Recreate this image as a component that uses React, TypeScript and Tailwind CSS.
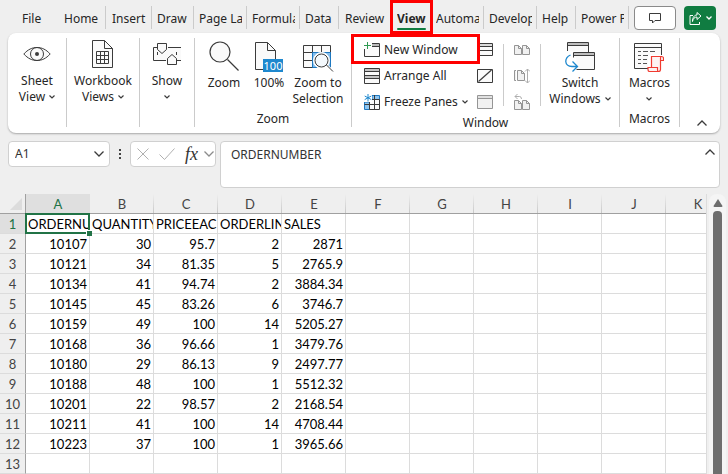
import type { ReactNode } from 'react'
import { clsx } from 'clsx'

interface TabItem {
  label: string
  width: string
  active?: boolean
}

const TABS: TabItem[] = [
  { label: 'File', width: 'w-[57px] pl-[22px]' },
  { label: 'Home', width: 'w-[49px] pl-[7px] border-r' },
  { label: 'Insert', width: 'w-[46px] pl-[6px] border-r' },
  { label: 'Draw', width: 'w-[42px] pl-[5px] border-r' },
  { label: 'Page La', width: 'w-[53px] pl-[5px] border-r' },
  { label: 'Formula', width: 'w-[53px] pl-[5px] border-r' },
  { label: 'Data', width: 'w-[39px] pl-[5px] border-r' },
  { label: 'Review', width: 'w-[53px] pl-[6px]' },
  { label: 'View', width: 'w-[39px] pl-[5px]', active: true },
  { label: 'Automa', width: 'w-[53px] pl-[5px] border-r' },
  { label: 'Develop', width: 'w-[53px] pl-[5px] border-r' },
  { label: 'Help', width: 'w-[39px] pl-[5px] border-r' },
  { label: 'Power P', width: 'w-[53px] pl-[5px] border-r' },
]

const COLUMNS = ['A', 'B', 'C', 'D', 'E', 'F', 'G', 'H', 'I', 'J', 'K']

const ROWS: string[][] = [
  ['ORDERNU', 'QUANTITY', 'PRICEEACH', 'ORDERLIN', 'SALES'],
  ['10107', '30', '95.7', '2', '2871'],
  ['10121', '34', '81.35', '5', '2765.9'],
  ['10134', '41', '94.74', '2', '3884.34'],
  ['10145', '45', '83.26', '6', '3746.7'],
  ['10159', '49', '100', '14', '5205.27'],
  ['10168', '36', '96.66', '1', '3479.76'],
  ['10180', '29', '86.13', '9', '2497.77'],
  ['10188', '48', '100', '1', '5512.32'],
  ['10201', '22', '98.57', '2', '2168.54'],
  ['10211', '41', '100', '14', '4708.44'],
  ['10223', '37', '100', '1', '3965.66'],
  [],
]

/* ---------- icons ---------- */

interface IconProps {
  w: number
  h: number
  children: ReactNode
  className?: string
}

function Icon({ w, h, children, className }: IconProps) {
  return (
    <svg
      width={w}
      height={h}
      viewBox={`0 0 ${w} ${h}`}
      fill="none"
      stroke="#3b3b3b"
      className={clsx('shrink-0', className)}
      aria-hidden="true"
    >
      {children}
    </svg>
  )
}

function Chevron({ className }: { className?: string }) {
  return (
    <Icon w={6} h={4} className={clsx('inline-block', className)}>
      <path d="M.5.5 3 3 5.5.5" strokeWidth="1.2" />
    </Icon>
  )
}

function EyeIcon() {
  return (
    <Icon w={28} h={32}>
      <path d="M.8 16C5 11.5 9 9.5 14 9.5S23 11.5 27.2 16C23 20.5 19 22.5 14 22.5S5 20.5.8 16Z" fill="#fafafa" />
      <circle cx="14" cy="16" r="6.5" />
      <circle cx="14" cy="16" r="2" fill="#3b3b3b" stroke="none" />
    </Icon>
  )
}

function WorkbookIcon() {
  return (
    <Icon w={22} h={32}>
      <path d="M.5 2.5h12l8 8v19H.5Z" fill="#fafafa" />
      <path d="M12.5 2.5v8h8" />
      <path d="M4.5 13.5h12v12h-12ZM4.5 17.5h12M4.5 21.5h12M8.5 13.5v12M12.5 13.5v12" />
    </Icon>
  )
}

function ShowIcon() {
  return (
    <Icon w={28} h={32}>
      <path d="M1 9.5h27v13H1Z" fill="#fafafa" stroke="none" />
      <path d="M4 9.5H.5v13H13M15 9.5h13M24 22.5h4M4.5 14v3M23.5 14v3" />
      <path d="M4.5 5.5h9v6l-4.5 4-4.5-4Z" fill="#fafafa" />
      <path d="M14.5 26.5h9v-6l-4.5-4-4.5 4Z" fill="#fafafa" />
    </Icon>
  )
}

function ZoomIcon() {
  return (
    <Icon w={30} h={34}>
      <circle cx="11" cy="14" r="10" fill="#fafafa" strokeWidth="1.2" />
      <path d="m18.5 21.5 11 11" strokeWidth="1.2" />
    </Icon>
  )
}

function HundredIcon() {
  return (
    <span className="relative block h-[34px] w-[28px]">
      <Icon w={28} h={34}>
        <path d="M.5 4.5h12l8 8v19H.5Z" fill="#fafafa" />
        <path d="M12.5 4.5v8h8" />
        <path d="M8 21h20v13H8Z" fill="#1e88ce" stroke="none" />
      </Icon>
      <span className="absolute right-0 bottom-0 w-5 text-center text-[11px] leading-[13px] text-white">100</span>
    </span>
  )
}

function ZoomSelectionIcon() {
  return (
    <Icon w={32} h={34}>
      <path d="M1.5 7.5h27v22h-27Z" fill="#fafafa" />
      <path d="M10 14h18v15H10Z" fill="#83bdec" stroke="none" />
      <path d="M1.5 14.5h27M1.5 22.5h9M10.5 7.5v22M19.5 7.5v7" />
      <path d="M28.5 14v15.5H10.5V14.5h18" stroke="#1e78c0" />
      <path d="m24 28 7 6" stroke="#fff" strokeWidth="4" />
      <circle cx="19.5" cy="22.5" r="8" fill="#fff" stroke="#fff" />
      <circle cx="19.5" cy="22.5" r="6.5" fill="#f4f9fd" />
      <path d="m24.5 27 6.5 6.5" />
    </Icon>
  )
}

function NewWindowIcon() {
  return (
    <Icon w={16} h={16}>
      <path d="M1 5h14v9H1Z" fill="#fafafa" stroke="none" />
      <path d="M8 3h7" stroke="#bbb" strokeWidth="2" />
      <path d="M.5 7v7.5h15V1.500H8M8 4.500h7.500" />
      <path d="M3.500 0v7M0 3.500h7" stroke="#2f9a52" />
    </Icon>
  )
}

function ArrangeIcon() {
  return (
    <Icon w={16} h={16}>
      <path d="M.5.5h15v15H.5Z" fill="#fafafa" />
      <path d="M1 2h14M1 9h14" stroke="#c4c4c4" strokeWidth="2" />
      <path d="M.5 3.5h15M.5 7.5h15M.5 10.5h15" />
    </Icon>
  )
}

function FreezeIcon() {
  return (
    <Icon w={16} h={16}>
      <path d="M5 1h10.5v14.5H.5V8" fill="#fafafa" stroke="none" />
      <path d="M8 1.5h7.5v4H8ZM.5 8h5v7.5h-5Z" fill="#8ec5f0" stroke="#1e78c0" />
      <path d="M5.5 5.5h10v10h-10ZM10.5 1v14.5M.5 10.5h15" />
      <path d="M0 0h8v8H0Z" fill="#fff" stroke="none" />
      <path d="M4 0v7.5M.7 2l6.6 3.6M7.3 2 .7 5.6" stroke="#1e88ce" />
    </Icon>
  )
}

function SplitIcon() {
  return (
    <Icon w={16} h={16}>
      <path d="M.5 1.5h15v12H.5Z" fill="#fafafa" />
      <path d="M.5 4.5h15M.5 8.5h15" />
      <path d="M1 3h14" stroke="#bbb" />
    </Icon>
  )
}

function HideIcon() {
  return (
    <Icon w={16} h={16}>
      <path d="M.5 1.5h15v13H.5Z" fill="#fafafa" />
      <path d="M1.5 13.5 14.5 2" strokeWidth="1.2" />
    </Icon>
  )
}

function UnhideIcon() {
  return (
    <Icon w={16} h={16}>
      <path d="M.5 1.5h15v13H.5ZM.5 4.5h15" fill="#f1f1f1" stroke="#959595" />
      <path d="M1 3h14" stroke="#cfcfcf" />
    </Icon>
  )
}

function SideBySideIcon() {
  return (
    <Icon w={16} h={16}>
      <path d="M.5 3.5h4l3 3v6h-7ZM8.5 3.5h4l3 3v6h-7Z" fill="#f1f1f1" stroke="#959595" />
      <path d="M4.5 3.5v3h3M12.5 3.5v3h3" stroke="#959595" />
    </Icon>
  )
}

function SyncScrollIcon() {
  return (
    <Icon w={16} h={16}>
      <path d="M2 2.500H.5v10H2M3.500 2.500h4l3 3v7h-7Z" fill="#f1f1f1" stroke="#959595" />
      <path d="M7.500 2.500v3h3" stroke="#959595" />
      <path d="M13.500 1v14M11 3.500 13.500 1 16 3.500M11 12.500l2.500 2.500 2.500-2.500" stroke="#adadad" />
    </Icon>
  )
}

function ResetPositionIcon() {
  return (
    <Icon w={16} h={16}>
      <path d="M.5 6.500h4l3 3v6h-7ZM8.500 6.500h4l3 3v6h-7Z" fill="#f1f1f1" stroke="#959595" />
      <path d="M4.500 6.500v3h3M12.500 6.500v3h3" stroke="#959595" />
      <path d="M3.500 0 1 2.500 3.500 5M1 2.500h4.500q2 0 2 2.500" stroke="#adadad" />
    </Icon>
  )
}

function SwitchIcon() {
  return (
    <Icon w={30} h={34}>
      <path d="M2.500 13V4.500h21V14" fill="#fafafa" />
      <path d="M3 6h20" stroke="#bdbdbd" strokeWidth="2" />
      <path d="M2.500 7.500h21" />
      <path d="M8.500 14.500h21v17h-21Z" fill="#fafafa" />
      <path d="M9 16h20" stroke="#bdbdbd" strokeWidth="2" />
      <path d="M8.500 17.500h21" />
      <path d="M3.500 19.500h8v13h-8Z" fill="#fff" stroke="none" />
      <path d="M5.500 17C-1 20-1 28 7 28.500h5M7.500 23.500l5 5-5 5" stroke="#1e88ce" strokeWidth="1.3" />
    </Icon>
  )
}

function MacrosIcon() {
  return (
    <Icon w={30} h={34}>
      <path d="M.5 5.500h27v25H.5Z" fill="#fafafa" />
      <path d="M.5 9.500h27" />
      <path d="M4 13.500h3M9 13.500h5M16 13.500h5M4 17.500h3M9 17.500h5M4 21.500h3M9 21.500h4M4 25.500h3M9 25.500h4" stroke="#555" />
      <path d="M14 17h16v17H14Z" fill="#fff" stroke="none" />
      <path
        d="M17.500 29.500v-11h10q2 0 2 2v2h-3v9q0 2-2 2h-9q-1.500 0-1.500-2v-2h9.500v2q0 2 1 2M26.500 22v-2q0-1.500 1-1.500"
        fill="#fdf3f2"
        stroke="#f03a30"
        strokeWidth="1.2"
      />
    </Icon>
  )
}

function WideChevron({ up = false, className, light = false }: { up?: boolean; className?: string; light?: boolean }) {
  return (
    <Icon w={10} h={6} className={className}>
      <path d={up ? 'M.5 5.500 5 1l4.500 4.500' : 'M.5.5 5 5 9.500.5'} stroke={light ? '#8c8c8c' : '#3b3b3b'} strokeWidth="1.3" />
    </Icon>
  )
}

/* ---------- ribbon ---------- */

function Tabs() {
  return (
    <div className="flex h-[33px] items-start pt-[6px]">
      {TABS.map((tab) => (
        <button
          key={tab.label}
          type="button"
          className={clsx(
            'relative h-[23px] shrink-0 border-[#cbcbcb] pt-px pr-1 text-left leading-6',
            tab.width,
            tab.active && 'font-bold',
          )}
        >
          <span className="block overflow-hidden whitespace-nowrap">{tab.label}</span>
          {tab.active && (
            <>
              <span className="absolute -bottom-px left-[5px] h-[2px] w-[29px] rounded bg-[#107c41]" />
              <span className="absolute -top-[6px] -left-[2px] z-10 h-[34px] w-[43px] border-3 border-[#fe0000]" />
            </>
          )}
        </button>
      ))}
      <div className="flex flex-1 justify-end gap-2 pr-3">
        <button
          type="button"
          aria-label="Comments"
          className="flex h-6 w-[42px] items-center justify-center rounded border border-[#8a8a8a] bg-white"
        >
          <Icon w={12} h={12}>
            <path d="M.5 1.500h11v7H6L3.500 11V8.500h-3Z" />
          </Icon>
        </button>
        <button
          type="button"
          aria-label="Share"
          className="flex h-6 w-8 items-center justify-center gap-1 rounded bg-[#107c41]"
        >
          <Icon w={13} h={13}>
            <path d="M4 3.500H1v9h9.500V10M3.500 9.500C4 6.500 5.500 5 8 5V7.500l4-3.500-4-3.500V3C5.500 3 3.500 5 3.500 9.500Z" stroke="#fff" />
          </Icon>
          <svg width="6" height="4" fill="none" stroke="#fff" strokeWidth="1.3" aria-hidden="true">
            <path d="M.5.5 3 3 5.500.5" />
          </svg>
        </button>
      </div>
    </div>
  )
}

interface GroupProps {
  label?: string
  width: string
  children: ReactNode
}

function Group({ label, width, children }: GroupProps) {
  return (
    <div className={clsx('flex h-[89px] shrink-0 flex-col border-r border-[#cbcbcb]', width)}>
      <div className="flex h-[79px] justify-center">{children}</div>
      {label && <div className="text-center leading-4">{label}</div>}
    </div>
  )
}

interface LargeButtonProps {
  icon: ReactNode
  lines: string[]
  chevron?: boolean
  width?: string
}

function LargeButton({ icon, lines, chevron, width }: LargeButtonProps) {
  return (
    <button
      type="button"
      className={clsx('flex flex-col items-center gap-[3px] self-start leading-4 whitespace-nowrap', width)}
    >
      {icon}
      <span className="flex flex-col items-center">
        {lines.map((line, i) => (
          <span key={line} className="flex items-center gap-1">
            {line}
            {chevron && i === 1 && <Chevron />}
          </span>
        ))}
        {chevron && lines.length === 1 && (
          <span className="flex h-4 items-center">
            <Chevron />
          </span>
        )}
      </span>
    </button>
  )
}

function SmallButton({ icon, label, chevron }: { icon: ReactNode; label: string; chevron?: boolean }) {
  return (
    <button type="button" className="flex h-[26px] items-center gap-1 whitespace-nowrap">
      {icon}
      <span>{label}</span>
      {chevron && <Chevron />}
    </button>
  )
}

function IconButton({ icon, label }: { icon: ReactNode; label: string }) {
  return (
    <button type="button" aria-label={label} className="flex h-[26px] items-center">
      {icon}
    </button>
  )
}

function Ribbon() {
  return (
    <div className="mx-2 flex h-[100px] rounded-lg bg-white pt-[5px] shadow-[0_1px_2px_rgba(0,0,0,0.3)]">
      <Group width="w-[59px]">
        <LargeButton icon={<EyeIcon />} lines={['Sheet', 'View']} chevron />
      </Group>
      <Group width="w-[73px]">
        <LargeButton icon={<WorkbookIcon />} lines={['Workbook', 'Views']} chevron />
      </Group>
      <Group width="w-[55px]">
        <LargeButton icon={<ShowIcon />} lines={['Show']} chevron />
      </Group>
      <Group width="w-[157px]" label="Zoom">
        <LargeButton width="w-[54px]" icon={<ZoomIcon />} lines={['Zoom']} />
        <LargeButton width="w-[36px]" icon={<HundredIcon />} lines={['100%']} />
        <LargeButton width="w-[62px]" icon={<ZoomSelectionIcon />} lines={['Zoom to', 'Selection']} />
      </Group>
      <Group width="w-[268px]" label="Window">
        <div className="relative -mt-px w-[125px] pl-3">
          <SmallButton icon={<NewWindowIcon />} label="New Window" />
          <SmallButton icon={<ArrangeIcon />} label="Arrange All" />
          <SmallButton icon={<FreezeIcon />} label="Freeze Panes" chevron />
          <span className="absolute -top-[3px] -left-px z-10 h-[30px] w-[129px] border-3 border-[#fe0000]" />
        </div>
        <div className="-mt-px w-[26px]">
          <IconButton icon={<SplitIcon />} label="Split" />
          <IconButton icon={<HideIcon />} label="Hide" />
          <IconButton icon={<UnhideIcon />} label="Unhide" />
        </div>
        <div className="mt-[6px] h-[62px] w-[38px] border-x border-[#cbcbcb] pl-[10px]">
          <div className="-mt-[7px]">
            <IconButton icon={<SideBySideIcon />} label="View Side by Side" />
            <IconButton icon={<SyncScrollIcon />} label="Synchronous Scrolling" />
            <IconButton icon={<ResetPositionIcon />} label="Reset Window Position" />
          </div>
        </div>
        <LargeButton width="w-[78px]" icon={<SwitchIcon />} lines={['Switch', 'Windows']} chevron />
      </Group>
      <Group width="w-[60px]" label="Macros">
        <LargeButton icon={<MacrosIcon />} lines={['Macros']} chevron />
      </Group>
      <div className="flex flex-1 items-end justify-end pr-[13px] pb-[7px]">
        <button type="button" aria-label="Collapse ribbon">
          <WideChevron up />
        </button>
      </div>
    </div>
  )
}

/* ---------- formula bar ---------- */

function FormulaBar() {
  return (
    <div className="mx-2 mt-2 flex items-start text-[#333]">
      <div className="flex h-[26px] w-[102px] items-center rounded border border-[#d0d0d0] bg-white pr-[5px] pl-[6px]">
        <input aria-label="Name box" defaultValue="A1" className="min-w-0 flex-1 bg-transparent outline-none" />
        <button type="button" aria-label="Show names">
          <WideChevron />
        </button>
      </div>
      <div className="flex h-[26px] w-5 flex-col items-center justify-center gap-[2px]">
        <span className="size-[2px] bg-[#444]" />
        <span className="size-[2px] bg-[#444]" />
        <span className="size-[2px] bg-[#444]" />
      </div>
      <div className="mr-1 flex h-[26px] w-[86px] items-center justify-between rounded border border-[#d0d0d0] bg-white pr-px pl-[6px]">
        <button type="button" aria-label="Cancel">
          <Icon w={12} h={12}>
            <path d="m.5.5 11 11m0-11-11 11" stroke="#b0b0b0" />
          </Icon>
        </button>
        <button type="button" aria-label="Enter" className="ml-2">
          <Icon w={16} h={12}>
            <path d="m.5 6.500 5 5 10-11" stroke="#b0b0b0" />
          </Icon>
        </button>
        <button
          type="button"
          aria-label="Insert function"
          className="ml-2 font-['Liberation_Serif',serif] text-[18px] leading-5 italic"
        >
          fx
        </button>
        <WideChevron light className="ml-1" />
      </div>
      <div className="flex h-[47px] flex-1 items-start rounded border border-[#d0d0d0] bg-white pr-1">
        <textarea
          aria-label="Formula bar"
          defaultValue="ORDERNUMBER"
          className="h-full min-w-0 flex-1 resize-none bg-transparent pt-[5px] pl-[10px] leading-4 outline-none"
        />
        <button type="button" aria-label="Collapse formula bar" className="pt-[7px]">
          <WideChevron up />
        </button>
      </div>
    </div>
  )
}

/* ---------- worksheet ---------- */

function Sheet() {
  return (
    <div className="flex min-h-0 flex-1 pt-[6px]">
      <div className="min-w-0 flex-1 overflow-hidden border-r border-[#dcdcdc]">
        <table className="w-[730px] table-fixed border-separate border-spacing-0 font-[Lato,sans-serif] text-[13px] leading-[18px] text-black">
          <thead>
            <tr className="h-5 bg-[#efefef] text-[#444]">
              <th className="w-[26px] border-r border-b border-[#a0a0a0] p-0" aria-label="Select all">
                <svg width="12" height="12" className="ml-[10px]" aria-hidden="true">
                  <path d="M12 0v12H0Z" fill="#dcdcdc" />
                </svg>
              </th>
              {COLUMNS.map((col) => (
                <th
                  key={col}
                  scope="col"
                  className={clsx(
                    'w-16 border-b p-0 pt-px font-normal',
                    col === 'A'
                      ? 'border-[#107c41] bg-[#dfdfdf] text-[#217346]'
                      : 'border-[#a0a0a0] bg-[linear-gradient(to_bottom,#efefef,#c8c8c8)] bg-[length:1px_100%] bg-right bg-no-repeat',
                  )}
                >
                  {col}
                </th>
              ))}
            </tr>
          </thead>
          <tbody>
            {ROWS.map((row, r) => (
              <tr key={r} className="h-5">
                <th
                  scope="row"
                  className={clsx(
                    'border-r border-b border-r-[#a0a0a0] border-b-[#dcdcdc] p-0 pt-px text-center font-normal',
                    r === 0 ? 'bg-[#dfdfdf] text-[#217346]' : 'bg-[#efefef] text-[#444]',
                  )}
                >
                  {r + 1}
                </th>
                {COLUMNS.map((col, c) => (
                  <td key={col} className="relative border-r border-b border-[#dcdcdc] bg-white p-0 pt-px">
                    <div
                      className={clsx(
                        'h-[18px] overflow-hidden whitespace-nowrap',
                        r === 0 ? 'pl-[2px]' : 'pr-[2px] text-right',
                      )}
                    >
                      {row[c]}
                    </div>
                    {r === 0 && c === 0 && (
                      <span className="pointer-events-none absolute -top-px -right-px -bottom-px -left-px z-10 border-2 border-[#217346]">
                        <span className="absolute -right-[4px] -bottom-[4px] size-[6px] border-t border-l border-white bg-[#217346]" />
                      </span>
                    )}
                  </td>
                ))}
              </tr>
            ))}
          </tbody>
        </table>
      </div>
      <div className="mr-[2px] ml-[2px] flex w-[17px] flex-col items-center rounded-t-lg bg-[#f5f5f5] pt-[5px]">
        <svg width="10" height="8" aria-hidden="true">
          <path d="M5 0 9.500 7Q9.500 8 8.500 8h-7Q.5 8 .5 7Z" fill="#6e6e6e" />
        </svg>
        <span className="mt-1 w-[9px] flex-1 rounded-t bg-[#6e6e6e]" />
      </div>
    </div>
  )
}

export default function App() {
  return (
    <div className="flex h-screen flex-col overflow-hidden bg-[#efefef] font-['Noto_Sans','Open_Sans',sans-serif] text-xs text-[#262626]">
      <Tabs />
      <Ribbon />
      <FormulaBar />
      <Sheet />
    </div>
  )
}
